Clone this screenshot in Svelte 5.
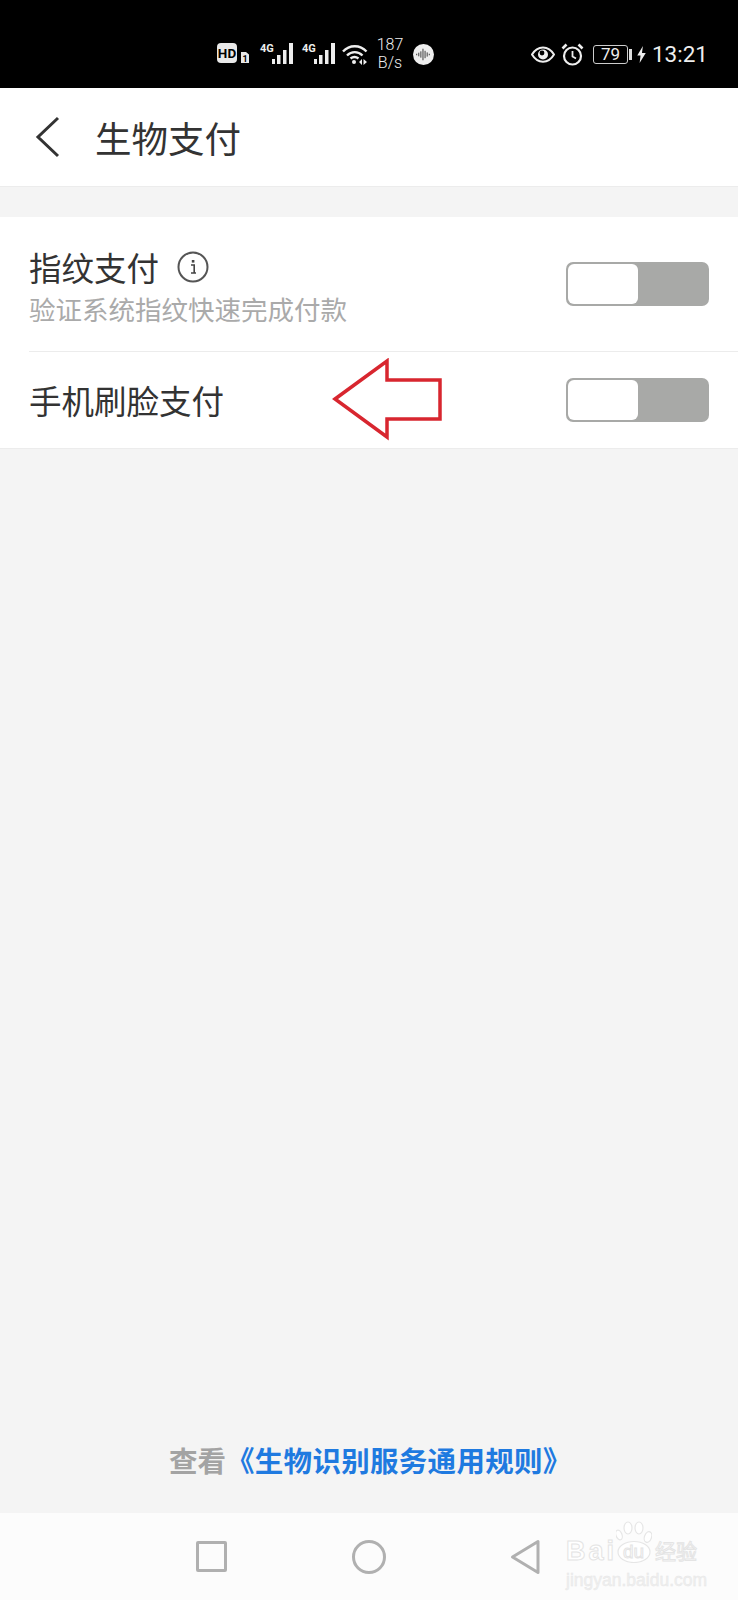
<script>
  const rows = [
    { title: "指纹支付", sub: "验证系统指纹快速完成付款", info: true },
    { title: "手机刷脸支付" },
  ];
</script>

<div class="page">
  <div class="status">
    <div class="group left">
      <svg class="hd" width="33" height="22" viewBox="0 0 33 22">
        <rect x="0" y="0" width="20" height="20" rx="4" fill="#e8e8e8" />
        <text x="10" y="15" class="hd-text" text-anchor="middle">HD</text>
        <path d="M24 9h5l3 2.500v8.500h-8z" fill="#e8e8e8" />
        <text x="28" y="18.500" class="sim-text" text-anchor="middle">1</text>
      </svg>
      {#each [0, 1] as s}
        <svg class="signal" width="35" height="22" viewBox="0 0 35 22">
          <text x="1" y="9" class="g-text">4G</text>
          <rect x="13" y="16" width="3" height="5" fill="#eee" />
          <rect x="18" y="12" width="3.500" height="9" fill="#eee" />
          <rect x="24" y="7" width="3.500" height="14" fill="#eee" />
          <rect x="30" y="0" width="4" height="21" fill="#eee" />
        </svg>
      {/each}
      <svg class="wifi" width="26" height="22" viewBox="0 0 26 22" fill="none" stroke="#eee" stroke-width="2.400">
        <path d="M1 8.500c6.500-7 17-7 23.500 0" />
        <path d="M5 12.500c4.500-4.500 11-4.500 15.500 0" />
        <path d="M8.500 15.500c2.500-2 5.500-2 8 0" />
        <circle cx="12" cy="19" r="2" fill="#eee" stroke="none" />
        <path d="M17 19l3-3v6zM21.500 16l3.500 3-3.500 3z" fill="#eee" stroke="none" />
      </svg>
      <div class="speed"><span>187</span><span>B/s</span></div>
      <svg class="sound" width="21" height="21" viewBox="0 0 20 20">
        <circle cx="10" cy="10" r="10" fill="#eee" />
        <path d="M3.500 9.300v1.400M5.500 8.300v3.400M7.500 7v6M9.500 4.500v11M11.500 6.500v7M13.500 8v4M15.500 9.300v1.400" stroke="#333" stroke-width=".9" />
      </svg>
    </div>
    <div class="group right">
      <svg class="eye" width="24" height="17" viewBox="0 0 24 17">
        <path d="M1 8.500c5.500-9.500 16.500-9.500 22 0c-5.500 9.500-16.500 9.500-22 0z" fill="none" stroke="#eee" stroke-width="2" />
        <circle cx="12" cy="8.500" r="5" fill="#eee" />
        <circle cx="11" cy="7" r="2.400" fill="#000" />
      </svg>
      <svg class="alarm" width="23" height="23" viewBox="0 0 23 23" fill="none" stroke="#eee" stroke-width="2.200">
        <circle cx="11.500" cy="13" r="8.500" />
        <path d="M11.500 8v5.500l3.500 2" stroke-width="1.800" />
        <path d="M1.500 5.500l4-4M21.500 5.500l-4-4" stroke-width="2.600" />
      </svg>
      <div class="battery">79</div>
      <div class="nub"></div>
      <svg class="bolt" width="9" height="17" viewBox="0 0 9 18">
        <path d="M6 0L0 10h3.500L2.500 18L9 7.500H5z" fill="#eee" />
      </svg>
      <span class="time">13:21</span>
    </div>
  </div>

  <header class="header">
    <svg class="back" width="26" height="42" viewBox="0 0 26 42" fill="none" stroke="#333" stroke-width="3">
      <path d="M23 2L3 21l20 19" />
    </svg>
    <h1>生物支付</h1>
  </header>

  <div class="list">
    {#each rows as row}
      <div class="row" class:tall={row.sub}>
        <div class="label">
          <div class="title">
            {row.title}
            {#if row.info}
              <svg class="info" width="32" height="32" viewBox="0 0 32 32">
                <circle cx="16" cy="16" r="14.500" fill="none" stroke="#555" stroke-width="2" />
                <path d="M14 14h3.200v8h1.800M14 22h3.200" fill="none" stroke="#444" stroke-width="1.600" />
                <rect x="14.800" y="9" width="2.600" height="2.600" fill="#444" />
              </svg>
            {/if}
          </div>
          {#if row.sub}
            <div class="sub">{row.sub}</div>
          {/if}
        </div>
        <div class="toggle"><div class="knob"></div></div>
      </div>
    {/each}
    <svg class="arrow" width="112" height="84" viewBox="0 0 112 84">
      <path d="M4 41L56 3V22H109V61H56V79z" fill="none" stroke="#d8262f" stroke-width="3.500" />
    </svg>
  </div>

  <div class="spacer"></div>

  <div class="rules">查看<span class="link">《生物识别服务通用规则》</span></div>

  <nav class="nav">
    <div class="square"></div>
    <div class="circle"></div>
    <svg class="tri" width="30" height="36" viewBox="0 0 30 36">
      <path d="M2.500 18L28 2.500V33.500z" fill="none" stroke="#b0b0b0" stroke-width="3" stroke-linejoin="round" />
    </svg>
    <div class="mark">
      <div class="mark-top">
        <span class="bai">Bai</span>
        <span class="paw">
          <svg width="36" height="42" viewBox="0 0 36 42" fill="#fff" stroke="#e6e6e6" stroke-width="1.200">
            <ellipse cx="3" cy="14" rx="3" ry="5" transform="rotate(-20 3 14)" />
            <ellipse cx="12" cy="7" rx="4" ry="6" />
            <ellipse cx="23" cy="7" rx="4" ry="6" />
            <ellipse cx="32" cy="16" rx="3.500" ry="5.500" transform="rotate(20 32 16)" />
            <ellipse cx="18" cy="31" rx="16" ry="10.500" />
          </svg>
          <span class="du">du</span>
        </span>
        <span class="jy">经验</span>
      </div>
      <div class="mark-url">jingyan.baidu.com</div>
    </div>
  </nav>
</div>

<style>
  :global(body) {
    margin: 0;
    background: #f4f4f4;
  }
  .page {
    width: 738px;
    height: 1600px;
    display: flex;
    flex-direction: column;
    background: #f4f4f4;
    font-family: "Noto Sans CJK SC", "Noto Sans", sans-serif;
    overflow: hidden;
  }
  .status {
    height: 88px;
    flex: none;
    background: #000;
    display: flex;
    align-items: center;
    justify-content: space-between;
    padding: 20px 30px 0 217px;
    box-sizing: border-box;
    color: #eee;
    font-family: Roboto, sans-serif;
  }
  .group {
    display: flex;
    align-items: center;
  }
  .signal {
    margin-left: 9px;
  }
  .signal + .signal {
    margin-left: 7px;
  }
  .wifi {
    margin-left: 6px;
  }
  .hd-text {
    font: 700 13.500px Roboto, sans-serif;
    fill: #000;
  }
  .sim-text {
    font: 700 9px Roboto, sans-serif;
    fill: #000;
  }
  .g-text {
    font: 700 11px Roboto, sans-serif;
    fill: #eee;
  }
  .speed {
    margin-left: 8px;
    display: flex;
    flex-direction: column;
    align-items: center;
    font-size: 16px;
    line-height: 18px;
    width: 28px;
    font-weight: 300;
  }
  .sound {
    margin-left: 9px;
  }
  .alarm {
    margin-left: 6px;
  }
  .battery {
    margin-left: 9px;
    width: 35px;
    height: 19px;
    border: 1px solid #ccc;
    border-radius: 3px;
    box-sizing: border-box;
    font-size: 17px;
    line-height: 17px;
    text-align: center;
  }
  .nub {
    width: 3px;
    height: 11px;
    margin-left: 1px;
    background: #ddd;
  }
  .bolt {
    margin-left: 5px;
  }
  .time {
    margin-left: 6px;
    font-size: 22.500px;
    line-height: 24px;
  }
  .header {
    height: 99px;
    flex: none;
    box-sizing: border-box;
    background: #fff;
    border-bottom: 1px solid #ececec;
    display: flex;
    align-items: center;
    padding-left: 35px;
  }
  h1 {
    margin: 0 0 0 34px;
    font-size: 36.500px;
    font-weight: 400;
    color: #333;
  }
  .list {
    margin-top: 30px;
    background: #fff;
    position: relative;
    border-bottom: 1px solid #ececec;
  }
  .row {
    height: 96px;
    display: flex;
    align-items: center;
    justify-content: space-between;
    padding: 0 29px;
  }
  .row.tall {
    height: 134px;
    position: relative;
    border-bottom: 1px solid #ececec;
    margin-left: 29px;
    padding-left: 0;
  }
  .title {
    font-size: 32.500px;
    line-height: 42px;
    color: #333;
    display: flex;
    align-items: center;
  }
  .info {
    margin-left: 18px;
  }
  .sub {
    font-size: 26.500px;
    line-height: 36px;
    color: #aaa;
    margin-top: 3px;
    margin-bottom: -4px;
    white-space: nowrap;
  }
  .toggle {
    width: 143px;
    height: 44px;
    box-sizing: border-box;
    background: #a8a9a7;
    border-radius: 7px;
    padding: 2px;
    flex: none;
  }
  .knob {
    width: 70px;
    height: 40px;
    background: #fff;
    border-radius: 6px;
  }
  .arrow {
    position: absolute;
    left: 331px;
    top: 141px;
  }
  .spacer {
    flex: 1;
  }
  .rules {
    font-size: 28.500px;
    font-weight: 700;
    color: #a3a3a3;
    padding-left: 169px;
    line-height: 40px;
    margin-bottom: 33px;
    white-space: nowrap;
  }
  .link {
    color: #1f7ae0;
    letter-spacing: 0.3px;
  }
  .nav {
    height: 87px;
    flex: none;
    background: #fcfcfc;
    display: flex;
    align-items: center;
    padding-left: 196px;
    position: relative;
  }
  .square {
    width: 31px;
    height: 31px;
    box-sizing: border-box;
    border: 3px solid #b0b0b0;
    border-radius: 2px;
  }
  .circle {
    width: 34px;
    height: 34px;
    box-sizing: border-box;
    border: 3px solid #b0b0b0;
    border-radius: 50%;
    margin-left: 125px;
  }
  .tri {
    margin-left: 124px;
  }
  .mark {
    position: absolute;
    left: 566px;
    top: 8px;
    width: 132px;
    color: #fff;
    font-family: "Liberation Sans", sans-serif;
  }
  .mark-top {
    display: flex;
    align-items: flex-end;
    height: 42px;
    -webkit-text-stroke: 1px #e4e4e4;
    white-space: nowrap;
  }
  .bai {
    font-size: 27px;
    line-height: 24px;
    letter-spacing: 3px;
    width: 50px;
    font-weight: 700;
  }
  .paw {
    position: relative;
    width: 36px;
    height: 42px;
    flex: none;
  }
  .paw svg {
    display: block;
  }
  .du {
    position: absolute;
    left: 7px;
    top: 20px;
    font-size: 19px;
    line-height: 22px;
  }
  .jy {
    margin-left: 3px;
    font-size: 21px;
    line-height: 26px;
    font-family: "Noto Sans CJK SC", sans-serif;
  }
  .mark-url {
    font-size: 17.500px;
    line-height: 18px;
    margin-top: 8px;
    white-space: nowrap;
    color: #f0f0f0;
    -webkit-text-stroke: 0.4px #e6e6e6;
  }
</style>
